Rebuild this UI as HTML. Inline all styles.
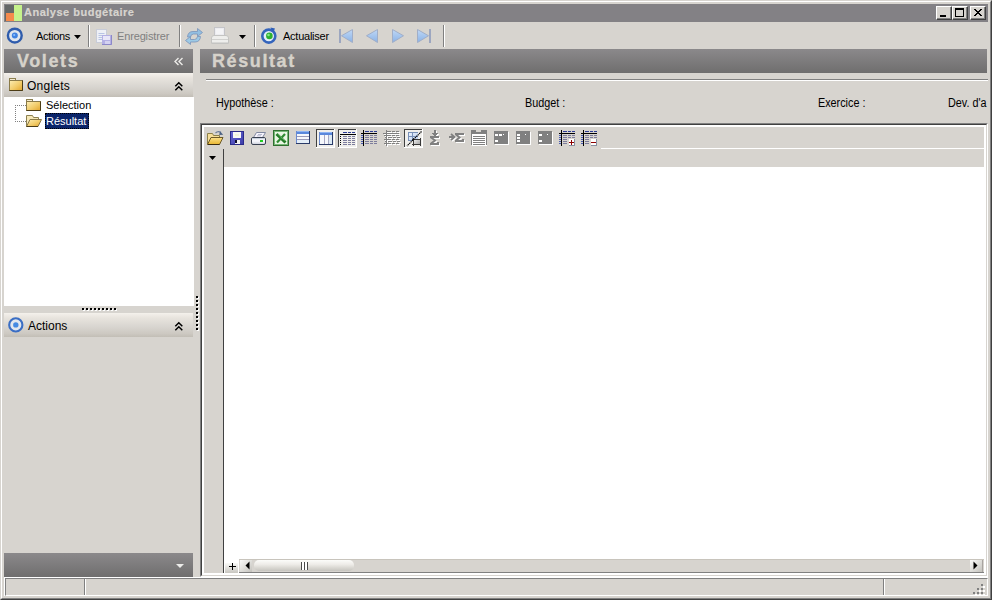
<!DOCTYPE html>
<html><head><meta charset="utf-8">
<style>
*{margin:0;padding:0;box-sizing:border-box}
html,body{width:992px;height:600px;overflow:hidden;background:#d7d4cf;font-family:"Liberation Sans",sans-serif;font-size:11px;color:#000}
.a{position:absolute}
.t{position:absolute;white-space:nowrap;line-height:13px}
svg{position:absolute;overflow:visible}
.sep{position:absolute;top:25px;width:2px;height:22px;border-left:1px solid #808080;border-right:1px solid #fff}
.hdrD{position:absolute;background:linear-gradient(#8b898b,#6f6e6e)}
.hdrL{position:absolute;background:linear-gradient(#f4f1ec 0%,#e8e4de 20%,#d9d6d1 55%,#cdc9c2 85%,#c2beb6 100%)}
.btn{position:absolute;width:16px;height:14px;background:#d7d4cf;border-top:1px solid #fff;border-left:1px solid #fff;border-right:1px solid #404040;border-bottom:1px solid #404040;box-shadow:inset -1px -1px 0 #808080}
.press{position:absolute;width:19px;height:19px;border-top:1px solid #404040;border-left:1px solid #404040;border-right:1px solid #fff;border-bottom:1px solid #fff;background:#eae8e4}
</style></head><body>
<!-- window frame -->
<div class="a" style="left:0;top:0;width:992px;height:600px;border-top:1px solid #d7d4cf;border-left:1px solid #d7d4cf;border-right:1px solid #404040;border-bottom:1px solid #404040"></div>
<div class="a" style="left:1px;top:1px;width:990px;height:598px;border-top:1px solid #fff;border-left:1px solid #fff;border-right:1px solid #808080;border-bottom:1px solid #808080"></div>

<!-- title bar -->
<div class="a" style="left:4px;top:4px;width:984px;height:18px;background:#838185"></div>
<div class="a" style="left:5px;top:5px;width:9px;height:16px;background:#656867"></div>
<div class="a" style="left:6px;top:13px;width:8px;height:8px;background:#f58a4c"></div>
<div class="a" style="left:14px;top:5px;width:8px;height:16px;background:#c6f28c"></div>
<div class="t" style="left:24px;top:6px;font-weight:bold;font-size:11px;color:#d7d4cf;letter-spacing:0.5px;-webkit-text-stroke:0.2px #d7d4cf">Analyse budgétaire</div>
<div class="btn" style="left:936px;top:6px"><div class="a" style="left:3px;top:8px;width:6px;height:2px;background:#000"></div></div>
<div class="btn" style="left:952px;top:6px"><div class="a" style="left:2px;top:1px;width:9px;height:9px;border:1px solid #000;border-top-width:2px"></div></div>
<div class="btn" style="left:970px;top:6px"><svg width="8" height="7" style="left:3px;top:2px" fill="#000"><rect x="0" y="0" width="1" height="1"/><rect x="1" y="0" width="1" height="1"/><rect x="6" y="0" width="1" height="1"/><rect x="7" y="0" width="1" height="1"/><rect x="1" y="1" width="1" height="1"/><rect x="2" y="1" width="1" height="1"/><rect x="5" y="1" width="1" height="1"/><rect x="6" y="1" width="1" height="1"/><rect x="2" y="2" width="1" height="1"/><rect x="3" y="2" width="1" height="1"/><rect x="4" y="2" width="1" height="1"/><rect x="5" y="2" width="1" height="1"/><rect x="3" y="3" width="1" height="1"/><rect x="4" y="3" width="1" height="1"/><rect x="2" y="4" width="1" height="1"/><rect x="3" y="4" width="1" height="1"/><rect x="4" y="4" width="1" height="1"/><rect x="5" y="4" width="1" height="1"/><rect x="1" y="5" width="1" height="1"/><rect x="2" y="5" width="1" height="1"/><rect x="5" y="5" width="1" height="1"/><rect x="6" y="5" width="1" height="1"/><rect x="0" y="6" width="1" height="1"/><rect x="1" y="6" width="1" height="1"/><rect x="6" y="6" width="1" height="1"/><rect x="7" y="6" width="1" height="1"/></svg></div>

<!-- toolbar -->
<div class="t" style="left:36px;top:30px;letter-spacing:-0.3px">Actions</div>
<div class="sep" style="left:88px"></div>
<div class="t" style="left:117px;top:30px;color:#808080;letter-spacing:-0.15px">Enregistrer</div>
<div class="sep" style="left:179px"></div>
<div class="sep" style="left:254px"></div>
<div class="t" style="left:283px;top:30px;letter-spacing:-0.25px">Actualiser</div>
<div class="sep" style="left:443px"></div>
<svg width="992" height="600" style="left:0;top:0"><circle cx="14.8" cy="35.6" r="6.9" fill="#e0e6ee" stroke="#2f5cac" stroke-width="2.4"/><circle cx="14.8" cy="35.6" r="3" fill="#3f82e2"/><circle cx="14.2" cy="35" r="1.1" fill="#8cc0ff"/><path d="M74 35 H81 L77.5 39Z" fill="#000"/><rect x="96.5" y="29.5" width="10" height="13" fill="#eef0f6" stroke="#c8ccd8"/><path d="M98.5 33.5h6M98.5 35.5h6M98.5 37.5h4M98.5 39.5h4" stroke="#b8c4e4"/><rect x="102" y="35" width="10" height="10" fill="#b4b0e4"/><path d="M111.5 35 V44.5 H102" fill="none" stroke="#8c88c8"/><rect x="103" y="36" width="7" height="4" fill="#e8e6f8"/><rect x="105" y="41" width="5" height="3" fill="#d4d2f0"/><path d="M187.5 37 Q188 31.5 193 31.5 H197.5 V28.5 L202.5 32.5 L197.5 36.5 V34 H193.5 Q191 34 190.5 37Z" fill="#92bfe2" stroke="#8098bc" stroke-width="0.9"/><path d="M200.5 36.5 Q200 42 195 42 H190.5 V44.5 L185.5 40.5 L190.5 36.5 V39.5 H194.5 Q197 39.5 197.5 36.5Z" fill="#9ccae6" stroke="#8098bc" stroke-width="0.9"/><rect x="214.5" y="27.5" width="10" height="8" fill="#ececf0" stroke="#c4c4c8"/><rect x="216" y="29" width="7" height="5" fill="#f4f4f6"/><path d="M211.5 43.5 V38 Q211.5 35.5 214 35.5 H226 Q228.5 35.5 228.5 38 V43.5Z" fill="#eeeeec" stroke="#c4c4c2"/><rect x="212" y="39" width="16" height="1" fill="#d0d0ce"/><rect x="212" y="42" width="16" height="1" fill="#d8d8d6"/><path d="M239 35 H246 L242.5 39Z" fill="#000"/><circle cx="268.8" cy="36.1" r="6.5" fill="#e4eef8" stroke="#3464bc" stroke-width="2.6"/><path d="M270.5 27.6 L275 28.4 L273.2 32.6 Z" fill="#2f5fb8"/><circle cx="269.4" cy="35.9" r="3.3" fill="#2eb030"/><circle cx="268.5" cy="35" r="1.3" fill="#86e486"/><defs><linearGradient id="nb" x1="0" y1="0" x2="0" y2="1"><stop offset="0" stop-color="#c0d8f6"/><stop offset="1" stop-color="#8ab2e6"/></linearGradient></defs><rect x="339" y="29" width="2" height="14" fill="#9ca6c0"/><path d="M341.5 35.75 L352.5 29.5 V42.5Z" fill="url(#nb)" stroke="#a0aec8"/><path d="M366.5 35.75 L377.5 29.5 V42.5Z" fill="url(#nb)" stroke="#a0aec8"/><path d="M392.5 29.5 L403.5 35.75 L392.5 42.5Z" fill="url(#nb)" stroke="#a0aec8"/><path d="M417.5 29.5 L428.5 35.75 L417.5 42.5Z" fill="url(#nb)" stroke="#a0aec8"/><rect x="429" y="29" width="2" height="14" fill="#9ca6c0"/></svg>

<!-- left pane -->
<div class="hdrD" style="left:4px;top:49px;width:189px;height:24px"></div>
<div class="t" style="left:17px;top:51px;font-weight:bold;font-size:18px;line-height:20px;color:#d6d2ca;letter-spacing:1.6px;-webkit-text-stroke:0.35px #d6d2ca">Volets</div>
<svg width="10" height="9" style="left:174px;top:58px"><path d="M4.5 0 L1 3.5 L4.5 7 M8.5 0 L5 3.5 L8.5 7" fill="none" stroke="#ecebe8" stroke-width="1.4"/></svg>
<div class="hdrL" style="left:4px;top:73px;width:189px;height:24px"></div>
<svg width="992" height="600" style="left:0;top:0">
<defs><linearGradient id="fg" x1="0" y1="0" x2="1" y2="1"><stop offset="0" stop-color="#fdeeb4"/><stop offset="0.55" stop-color="#f2cc6a"/><stop offset="1" stop-color="#e2a42a"/></linearGradient></defs>
<rect x="9.5" y="78.5" width="6" height="3" fill="#f4ead0" stroke="#8c8050"/>
<rect x="9.5" y="80.5" width="13" height="10" fill="url(#fg)" stroke="#8a7a48"/>
<path d="M22.5 80.5 V90.5 H9.5" fill="none" stroke="#4c3c14"/>
</svg>
<div class="t" style="left:27px;top:79px;font-size:12px;line-height:14px;letter-spacing:0.25px">Onglets</div>
<svg width="9" height="10" style="left:175px;top:82px"><path d="M0.3 4.2 L3.8 0.7 L7.3 4.2 M0.3 8.2 L3.8 4.7 L7.3 8.2" fill="none" stroke="#000" stroke-width="1.5"/></svg>
<div class="a" style="left:4px;top:97px;width:190px;height:209px;background:#fff"></div>
<!-- tree lines -->
<div class="a" style="left:15px;top:105px;width:1px;height:17px;background:repeating-linear-gradient(#808080 0 1px,transparent 1px 2px)"></div>
<div class="a" style="left:15px;top:105px;width:11px;height:1px;background:repeating-linear-gradient(90deg,#808080 0 1px,transparent 1px 2px)"></div>
<div class="a" style="left:15px;top:121px;width:11px;height:1px;background:repeating-linear-gradient(90deg,#808080 0 1px,transparent 1px 2px)"></div>
<svg width="992" height="600" style="left:0;top:0">
<rect x="26.5" y="99.5" width="6" height="3" fill="#f4ead0" stroke="#8c8050"/>
<rect x="26.5" y="101.5" width="14" height="9" fill="url(#fg)" stroke="#8a7a48"/>
<path d="M40.5 101.5 V110.5 H26.5" fill="none" stroke="#4c3c14"/>
<path d="M26.5 126.5 V115.5 H32.5 L33.5 117.5 H38.5 V120" fill="#f6e8b8" stroke="#8c8050"/>
<path d="M26.5 126.5 L30 119.5 H41.5 L38 126.5Z" fill="url(#fg)" stroke="#8a7a48"/>
<path d="M26.5 126.5 H38" stroke="#4c3c14"/>
</svg>
<div class="t" style="left:46px;top:99px">Sélection</div>
<div class="a" style="left:45px;top:113px;width:44px;height:16px;background:#0a246a;outline:1px dotted #000;outline-offset:-1px"></div>
<div class="t" style="left:46px;top:115px;color:#fff">Résultat</div>
<!-- splitter dots -->
<div class="a" style="left:83px;top:309px;width:34px;height:2px;background:repeating-linear-gradient(90deg,#fff 0 2px,transparent 2px 4px)"></div>
<div class="a" style="left:82px;top:308px;width:34px;height:2px;background:repeating-linear-gradient(90deg,#000 0 2px,transparent 2px 4px)"></div>
<div class="a" style="left:197px;top:297px;width:2px;height:34px;background:repeating-linear-gradient(#fff 0 2px,transparent 2px 4px)"></div>
<div class="a" style="left:196px;top:296px;width:2px;height:34px;background:repeating-linear-gradient(#000 0 2px,transparent 2px 4px)"></div>

<div class="hdrL" style="left:4px;top:313px;width:189px;height:24px"></div>
<svg width="17" height="17" style="left:7px;top:316px"><circle cx="8.8" cy="8.9" r="6.6" fill="#e2e7ee" stroke="#3b6ec4" stroke-width="2.1"/><circle cx="8.8" cy="8.9" r="2.7" fill="#448ae2"/></svg>
<div class="t" style="left:28px;top:319px;font-size:12px;line-height:14px;letter-spacing:0px">Actions</div>
<svg width="9" height="10" style="left:175px;top:322px"><path d="M0.3 4.2 L3.8 0.7 L7.3 4.2 M0.3 8.2 L3.8 4.7 L7.3 8.2" fill="none" stroke="#000" stroke-width="1.5"/></svg>

<div class="hdrD" style="left:4px;top:553px;width:189px;height:24px"></div>
<svg width="9" height="5" style="left:176px;top:564px"><path d="M0 0H8L4 4Z" fill="#ececea"/></svg>

<!-- right pane -->
<div class="hdrD" style="left:200px;top:49px;width:787px;height:24px"></div>
<div class="t" style="left:212px;top:51px;font-weight:bold;font-size:18px;line-height:20px;color:#d6d2ca;letter-spacing:1.6px;-webkit-text-stroke:0.35px #d6d2ca">Résultat</div>
<div class="a" style="left:206px;top:79px;width:782px;height:1px;background:#808080"></div>
<div class="a" style="left:206px;top:80px;width:782px;height:1px;background:#fff"></div>
<div class="t" style="left:216px;top:96px;font-size:12px;line-height:14px;transform:scaleX(0.9);transform-origin:0 0">Hypothèse :</div>
<div class="t" style="left:525px;top:96px;font-size:12px;line-height:14px;transform:scaleX(0.9);transform-origin:0 0">Budget :</div>
<div class="t" style="left:818px;top:96px;font-size:12px;line-height:14px;transform:scaleX(0.9);transform-origin:0 0">Exercice :</div>
<div class="a" style="left:948px;top:94px;width:40px;height:18px;overflow:hidden"><div class="t" style="left:0;top:2px;font-size:12px;line-height:14px;transform:scaleX(0.9);transform-origin:0 0">Dev. d'a</div></div>

<!-- grid -->
<div class="a" style="left:200px;top:123px;width:788px;height:454px;border-top:1px solid #808080;border-left:1px solid #808080;border-right:1px solid #fff;border-bottom:1px solid #fff"></div>
<div class="a" style="left:201px;top:124px;width:786px;height:452px;border-top:1px solid #404040;border-left:1px solid #404040;border-right:1px solid #d7d4cf;border-bottom:1px solid #d7d4cf"></div>
<div class="a" style="left:202px;top:125px;width:784px;height:450px;background:#fff"></div>
<div class="a" style="left:204px;top:127px;width:780px;height:21px;background:#d7d4cf"></div>
<div class="a" style="left:204px;top:148px;width:397px;height:1px;background:#d7d4cf"></div>
<div class="a" style="left:204px;top:149px;width:780px;height:18px;background:#d7d4cf"></div>
<div class="a" style="left:204px;top:149px;width:19px;height:424px;background:#d7d4cf"></div>
<div class="a" style="left:223px;top:149px;width:1px;height:424px;background:#404040"></div>
<svg width="8" height="5" style="left:209px;top:156px"><path d="M0 0H7L3.5 4Z" fill="#000"/></svg>

<!-- grid toolbar icons -->
<svg width="992" height="600" style="left:0;top:0"><defs>
<linearGradient id="fy" x1="0" y1="0" x2="0" y2="1"><stop offset="0" stop-color="#fae08a"/><stop offset="1" stop-color="#eab630"/></linearGradient>
<linearGradient id="fl" x1="0" y1="0" x2="1" y2="1"><stop offset="0" stop-color="#6868d6"/><stop offset="1" stop-color="#3a3aa6"/></linearGradient>
<linearGradient id="pr" x1="0" y1="0" x2="0" y2="1"><stop offset="0" stop-color="#e0e4ec"/><stop offset="0.5" stop-color="#fafaff"/><stop offset="1" stop-color="#c8ccd8"/></linearGradient>
<linearGradient id="bl" x1="0" y1="0" x2="1" y2="1"><stop offset="0" stop-color="#f0f6ff"/><stop offset="1" stop-color="#b8ccec"/></linearGradient>
<linearGradient id="gb" x1="0" y1="0" x2="1" y2="1"><stop offset="0" stop-color="#f8f8f8"/><stop offset="1" stop-color="#a0a0a0"/></linearGradient>
</defs><path d="M207.5 144.5 V133.5 H212.5 L213.5 135.5 H219.5 V137.5" fill="#f6de98" stroke="#8c8048"/><path d="M207.5 144.5 L211 137.5 H223 L219.5 144.5Z" fill="url(#fy)" stroke="#6c5a28"/><path d="M208 144.5 H219.5" stroke="#3c2c10"/><path d="M215.5 133 Q218 130.5 221 132.5" fill="none" stroke="#6a7c98" stroke-width="1.1"/><path d="M220 131.2 L223.2 134.8 L219.2 135Z" fill="#4c6284"/><rect x="230" y="131" width="14" height="14" fill="url(#fl)"/><rect x="230.5" y="131.5" width="13" height="13" fill="none" stroke="#2a2a88"/><rect x="233" y="132" width="8" height="6" fill="#f8f8f4"/><rect x="235" y="134" width="4" height="2" fill="#f0f4d8"/><rect x="235" y="140" width="5" height="4" fill="#f4f4f4"/><rect x="235" y="140" width="2" height="3" fill="#101030"/><path d="M256.5 132.5 H265.5 L262.5 137.5 H253.5Z" fill="#f6f4fc" stroke="#8088a0"/><path d="M258 134.5 H262 M257 135.8 H261" stroke="#a8acc4" stroke-width="0.8"/><path d="M253 137.5 H264 Q265.5 137.5 265.5 139 V143 Q265.5 144.5 264 144.5 H253 Q251.5 144.5 251.5 143 V139 Q251.5 137.5 253 137.5Z" fill="url(#pr)" stroke="#3a4252"/><rect x="252" y="138" width="13" height="1" fill="#c8d0dc"/><rect x="260" y="140" width="3" height="2" fill="#22cc22"/><rect x="273" y="130" width="16" height="16" fill="#2f6f2f"/><rect x="274" y="131" width="14" height="14" fill="#78b878"/><rect x="275" y="132" width="12" height="12" fill="#eaf6e4"/><path d="M276.5 134 L285.5 142.5" stroke="#237a26" stroke-width="3"/><path d="M285 134 L277 142.5" stroke="#2f8a32" stroke-width="2.2"/><path d="M277.5 133.8 L284.5 140.5" stroke="#7cc87c" stroke-width="0.7"/><rect x="296" y="131" width="14" height="13" fill="#2a3a68"/><rect x="297" y="131" width="12" height="3" fill="#5a88dc"/><rect x="297" y="131" width="12" height="1" fill="#8eb4f4"/><rect x="296" y="131" width="1" height="12" fill="#6a8ad0"/><rect x="297" y="134" width="12" height="9" fill="#f6f8fc"/><rect x="297" y="136" width="12" height="1" fill="#9a9ab8"/><rect x="297" y="139" width="12" height="1" fill="#9a9ab8"/><rect x="297" y="140" width="12" height="3" fill="#e4eef8"/><rect x="316" y="129" width="19" height="19" fill="#fff"/><rect x="316" y="129" width="18" height="18" fill="#404040"/><rect x="317" y="130" width="17" height="17" fill="#f0efec"/><rect x="338" y="129" width="19" height="19" fill="#fff"/><rect x="338" y="129" width="18" height="18" fill="#404040"/><rect x="339" y="130" width="17" height="17" fill="#f0efec"/><rect x="404" y="129" width="19" height="19" fill="#fff"/><rect x="404" y="129" width="18" height="18" fill="#404040"/><rect x="405" y="130" width="17" height="17" fill="#f0efec"/><rect x="319" y="132" width="14" height="13" fill="#2a3a68"/><rect x="320" y="132" width="12" height="3" fill="#5a88dc"/><rect x="320" y="132" width="12" height="1" fill="#8eb4f4"/><rect x="319" y="132" width="1" height="12" fill="#6a8ad0"/><rect x="320" y="135" width="12" height="9" fill="#f6f8fc"/><rect x="324" y="135" width="1" height="9" fill="#a8a8c4"/><rect x="328" y="135" width="1" height="9" fill="#a8a8c4"/><rect x="329" y="135" width="3" height="9" fill="#dceaf4"/><rect x="343" y="132" width="4" height="1" fill="#2c3c94"/><rect x="348" y="132" width="3" height="1" fill="#2c3c94"/><rect x="352" y="132" width="3" height="1" fill="#2c3c94"/><rect x="340" y="134" width="16" height="1" fill="#000"/><rect x="340" y="136" width="1" height="1" fill="#000"/><rect x="343" y="136" width="4" height="1" fill="#7c7c9c"/><rect x="348" y="136" width="3" height="1" fill="#7c7c9c"/><rect x="352" y="136" width="3" height="1" fill="#7c7c9c"/><rect x="340" y="138" width="1" height="1" fill="#000"/><rect x="343" y="138" width="4" height="1" fill="#7c7c9c"/><rect x="348" y="138" width="3" height="1" fill="#7c7c9c"/><rect x="352" y="138" width="3" height="1" fill="#7c7c9c"/><rect x="340" y="140" width="1" height="1" fill="#000"/><rect x="343" y="140" width="4" height="1" fill="#7c7c9c"/><rect x="348" y="140" width="3" height="1" fill="#7c7c9c"/><rect x="352" y="140" width="3" height="1" fill="#7c7c9c"/><rect x="340" y="142" width="1" height="1" fill="#000"/><rect x="343" y="142" width="4" height="1" fill="#7c7c9c"/><rect x="348" y="142" width="3" height="1" fill="#7c7c9c"/><rect x="352" y="142" width="3" height="1" fill="#7c7c9c"/><rect x="340" y="144" width="1" height="1" fill="#000"/><rect x="343" y="144" width="4" height="1" fill="#7c7c9c"/><rect x="348" y="144" width="3" height="1" fill="#7c7c9c"/><rect x="352" y="144" width="3" height="1" fill="#7c7c9c"/><rect x="363" y="130" width="1" height="16" fill="#000"/><rect x="361" y="133" width="16" height="1" fill="#000"/><rect x="365" y="131" width="4" height="1" fill="#2c3c94"/><rect x="370" y="131" width="3" height="1" fill="#2c3c94"/><rect x="374" y="131" width="3" height="1" fill="#2c3c94"/><rect x="361" y="135" width="2" height="1" fill="#4a5cb0"/><rect x="365" y="135" width="4" height="1" fill="#7c7c9c"/><rect x="370" y="135" width="3" height="1" fill="#7c7c9c"/><rect x="374" y="135" width="3" height="1" fill="#7c7c9c"/><rect x="361" y="137" width="2" height="1" fill="#4a5cb0"/><rect x="365" y="137" width="4" height="1" fill="#7c7c9c"/><rect x="370" y="137" width="3" height="1" fill="#7c7c9c"/><rect x="374" y="137" width="3" height="1" fill="#7c7c9c"/><rect x="361" y="139" width="2" height="1" fill="#4a5cb0"/><rect x="365" y="139" width="4" height="1" fill="#7c7c9c"/><rect x="370" y="139" width="3" height="1" fill="#7c7c9c"/><rect x="374" y="139" width="3" height="1" fill="#7c7c9c"/><rect x="361" y="141" width="2" height="1" fill="#4a5cb0"/><rect x="365" y="141" width="4" height="1" fill="#7c7c9c"/><rect x="370" y="141" width="3" height="1" fill="#7c7c9c"/><rect x="374" y="141" width="3" height="1" fill="#7c7c9c"/><rect x="361" y="143" width="2" height="1" fill="#4a5cb0"/><rect x="365" y="143" width="4" height="1" fill="#7c7c9c"/><rect x="370" y="143" width="3" height="1" fill="#7c7c9c"/><rect x="374" y="143" width="3" height="1" fill="#7c7c9c"/><g transform="translate(1,1)"><rect x="386" y="130" width="1" height="16" fill="#fff"/><rect x="383" y="133" width="16" height="1" fill="#fff"/><rect x="387" y="131" width="4" height="1" fill="#fff"/><rect x="392" y="131" width="3" height="1" fill="#fff"/><rect x="396" y="131" width="3" height="1" fill="#fff"/><rect x="384" y="135" width="2" height="1" fill="#fff"/><rect x="387" y="135" width="4" height="1" fill="#fff"/><rect x="392" y="135" width="3" height="1" fill="#fff"/><rect x="396" y="135" width="3" height="1" fill="#fff"/><rect x="385" y="137" width="1" height="1" fill="#fff"/><rect x="388" y="137" width="4" height="1" fill="#fff"/><rect x="393" y="137" width="3" height="1" fill="#fff"/><rect x="397" y="137" width="3" height="1" fill="#fff"/><rect x="384" y="139" width="2" height="1" fill="#fff"/><rect x="387" y="139" width="4" height="1" fill="#fff"/><rect x="392" y="139" width="3" height="1" fill="#fff"/><rect x="396" y="139" width="3" height="1" fill="#fff"/><rect x="385" y="141" width="1" height="1" fill="#fff"/><rect x="388" y="141" width="4" height="1" fill="#fff"/><rect x="393" y="141" width="3" height="1" fill="#fff"/><rect x="397" y="141" width="3" height="1" fill="#fff"/><rect x="384" y="143" width="2" height="1" fill="#fff"/><rect x="387" y="143" width="4" height="1" fill="#fff"/><rect x="392" y="143" width="3" height="1" fill="#fff"/><rect x="396" y="143" width="3" height="1" fill="#fff"/></g><rect x="386" y="130" width="1" height="16" fill="#808080"/><rect x="383" y="133" width="16" height="1" fill="#808080"/><rect x="387" y="131" width="4" height="1" fill="#808080"/><rect x="392" y="131" width="3" height="1" fill="#808080"/><rect x="396" y="131" width="3" height="1" fill="#808080"/><rect x="384" y="135" width="2" height="1" fill="#808080"/><rect x="387" y="135" width="4" height="1" fill="#808080"/><rect x="392" y="135" width="3" height="1" fill="#808080"/><rect x="396" y="135" width="3" height="1" fill="#808080"/><rect x="385" y="137" width="1" height="1" fill="#808080"/><rect x="388" y="137" width="4" height="1" fill="#808080"/><rect x="393" y="137" width="3" height="1" fill="#808080"/><rect x="397" y="137" width="3" height="1" fill="#808080"/><rect x="384" y="139" width="2" height="1" fill="#808080"/><rect x="387" y="139" width="4" height="1" fill="#808080"/><rect x="392" y="139" width="3" height="1" fill="#808080"/><rect x="396" y="139" width="3" height="1" fill="#808080"/><rect x="385" y="141" width="1" height="1" fill="#808080"/><rect x="388" y="141" width="4" height="1" fill="#808080"/><rect x="393" y="141" width="3" height="1" fill="#808080"/><rect x="397" y="141" width="3" height="1" fill="#808080"/><rect x="384" y="143" width="2" height="1" fill="#808080"/><rect x="387" y="143" width="4" height="1" fill="#808080"/><rect x="392" y="143" width="3" height="1" fill="#808080"/><rect x="396" y="143" width="3" height="1" fill="#808080"/><rect x="408" y="132" width="10" height="9" fill="url(#bl)"/><rect x="408" y="132" width="10" height="1" fill="#7890b8"/><rect x="408" y="132" width="1" height="9" fill="#7890b8"/><rect x="412" y="132" width="1" height="9" fill="#7890b8"/><rect x="408" y="136" width="10" height="1" fill="#7890b8"/><rect x="408" y="140" width="5" height="1" fill="#7890b8"/><rect x="413" y="139" width="7" height="6" fill="url(#gb)"/><rect x="413" y="138" width="1" height="8" fill="#383838"/><rect x="420" y="138" width="1" height="8" fill="#383838"/><rect x="412" y="139" width="9" height="1" fill="#383838"/><rect x="412" y="144" width="9" height="1" fill="#383838"/><path d="M421.5 131.5 L407 146" stroke="#000" stroke-width="1.1" stroke-dasharray="1.4 0.6"/><g transform="translate(1,1)"><rect x="434" y="130" width="2" height="4" fill="#fff"/><rect x="432" y="133" width="6" height="1" fill="#fff"/><rect x="433" y="134" width="4" height="1" fill="#fff"/><rect x="434" y="135" width="2" height="1" fill="#fff"/><rect x="430" y="136" width="9" height="2" fill="#fff"/><path d="M431 137.5 L435 140.5 L431 143.5" fill="none" stroke="#fff" stroke-width="2"/><rect x="430" y="143" width="9" height="2" fill="#fff"/><rect x="437" y="142" width="2" height="1" fill="#fff"/></g><rect x="434" y="130" width="2" height="4" fill="#808080"/><rect x="432" y="133" width="6" height="1" fill="#808080"/><rect x="433" y="134" width="4" height="1" fill="#808080"/><rect x="434" y="135" width="2" height="1" fill="#808080"/><rect x="430" y="136" width="9" height="2" fill="#808080"/><path d="M431 137.5 L435 140.5 L431 143.5" fill="none" stroke="#808080" stroke-width="2"/><rect x="430" y="143" width="9" height="2" fill="#808080"/><rect x="437" y="142" width="2" height="1" fill="#808080"/><g transform="translate(1,1)"><rect x="449" y="136" width="5" height="2" fill="#fff"/><path d="M451 134 L454.5 137 L451 140" fill="none" stroke="#fff" stroke-width="1.8"/><rect x="455" y="133" width="9" height="2" fill="#fff"/><path d="M456 134.5 L459.5 137.5 L456 140.5" fill="none" stroke="#fff" stroke-width="2"/><rect x="455" y="140" width="9" height="2" fill="#fff"/><rect x="462" y="139" width="2" height="1" fill="#fff"/></g><rect x="449" y="136" width="5" height="2" fill="#808080"/><path d="M451 134 L454.5 137 L451 140" fill="none" stroke="#808080" stroke-width="1.8"/><rect x="455" y="133" width="9" height="2" fill="#808080"/><path d="M456 134.5 L459.5 137.5 L456 140.5" fill="none" stroke="#808080" stroke-width="2"/><rect x="455" y="140" width="9" height="2" fill="#808080"/><rect x="462" y="139" width="2" height="1" fill="#808080"/><rect x="472" y="134" width="15" height="12" fill="#fff"/><rect x="471" y="130" width="1" height="15" fill="#808080"/><rect x="486" y="130" width="1" height="15" fill="#808080"/><rect x="472" y="130" width="4" height="4" fill="#808080"/><rect x="481" y="130" width="5" height="4" fill="#808080"/><rect x="476" y="132" width="5" height="2" fill="#808080"/><rect x="473" y="136" width="12" height="1" fill="#808080"/><rect x="473" y="138" width="12" height="1" fill="#808080"/><rect x="473" y="140" width="12" height="1" fill="#808080"/><rect x="473" y="142" width="12" height="1" fill="#808080"/><rect x="473" y="144" width="12" height="1" fill="#808080"/><rect x="495" y="132" width="14" height="13" fill="#fff"/><rect x="494" y="131" width="14" height="13" fill="#808080"/><rect x="517" y="132" width="14" height="13" fill="#fff"/><rect x="516" y="131" width="14" height="13" fill="#808080"/><rect x="539" y="132" width="14" height="13" fill="#fff"/><rect x="538" y="131" width="14" height="13" fill="#808080"/><rect x="495" y="134" width="3" height="2" fill="#fff"/><rect x="499" y="134" width="3" height="2" fill="#fff"/><rect x="503" y="134" width="1" height="1" fill="#fff"/><rect x="495" y="140" width="3" height="2" fill="#fff"/><rect x="495" y="140" width="1" height="1" fill="#fff"/><rect x="517" y="134" width="3" height="2" fill="#fff"/><rect x="517" y="137" width="3" height="2" fill="#fff"/><rect x="517" y="140" width="3" height="2" fill="#fff"/><rect x="525" y="134" width="1" height="1" fill="#fff"/><rect x="539" y="134" width="3" height="2" fill="#fff"/><rect x="539" y="140" width="3" height="2" fill="#fff"/><rect x="547" y="134" width="1" height="1" fill="#fff"/><rect x="561" y="130" width="1" height="16" fill="#000"/><rect x="559" y="133" width="16" height="1" fill="#000"/><rect x="563" y="131" width="4" height="1" fill="#2c3c94"/><rect x="568" y="131" width="3" height="1" fill="#2c3c94"/><rect x="572" y="131" width="3" height="1" fill="#2c3c94"/><rect x="559" y="135" width="2" height="1" fill="#4a5cb0"/><rect x="563" y="135" width="4" height="1" fill="#7c7c9c"/><rect x="568" y="135" width="3" height="1" fill="#7c7c9c"/><rect x="572" y="135" width="3" height="1" fill="#7c7c9c"/><rect x="559" y="137" width="2" height="1" fill="#4a5cb0"/><rect x="563" y="137" width="4" height="1" fill="#7c7c9c"/><rect x="568" y="137" width="3" height="1" fill="#7c7c9c"/><rect x="572" y="137" width="3" height="1" fill="#7c7c9c"/><rect x="559" y="139" width="2" height="1" fill="#4a5cb0"/><rect x="563" y="139" width="4" height="1" fill="#7c7c9c"/><rect x="559" y="141" width="2" height="1" fill="#4a5cb0"/><rect x="563" y="141" width="4" height="1" fill="#7c7c9c"/><rect x="559" y="143" width="2" height="1" fill="#4a5cb0"/><rect x="563" y="143" width="4" height="1" fill="#7c7c9c"/><rect x="569" y="139" width="6" height="7" fill="#8890a0"/><rect x="569" y="139" width="5" height="6" fill="#fff"/><rect x="571" y="140" width="1" height="5" fill="#900000"/><rect x="569" y="142" width="5" height="1" fill="#900000"/><rect x="583" y="130" width="1" height="16" fill="#000"/><rect x="581" y="133" width="16" height="1" fill="#000"/><rect x="585" y="131" width="4" height="1" fill="#2c3c94"/><rect x="590" y="131" width="3" height="1" fill="#2c3c94"/><rect x="594" y="131" width="3" height="1" fill="#2c3c94"/><rect x="581" y="135" width="2" height="1" fill="#4a5cb0"/><rect x="585" y="135" width="4" height="1" fill="#7c7c9c"/><rect x="590" y="135" width="3" height="1" fill="#7c7c9c"/><rect x="594" y="135" width="3" height="1" fill="#7c7c9c"/><rect x="581" y="137" width="2" height="1" fill="#4a5cb0"/><rect x="585" y="137" width="4" height="1" fill="#7c7c9c"/><rect x="590" y="137" width="3" height="1" fill="#7c7c9c"/><rect x="594" y="137" width="3" height="1" fill="#7c7c9c"/><rect x="581" y="139" width="2" height="1" fill="#4a5cb0"/><rect x="585" y="139" width="4" height="1" fill="#7c7c9c"/><rect x="581" y="141" width="2" height="1" fill="#4a5cb0"/><rect x="585" y="141" width="4" height="1" fill="#7c7c9c"/><rect x="581" y="143" width="2" height="1" fill="#4a5cb0"/><rect x="585" y="143" width="4" height="1" fill="#7c7c9c"/><rect x="591" y="139" width="6" height="7" fill="#8890a0"/><rect x="591" y="139" width="5" height="6" fill="#fff"/><rect x="591" y="142" width="5" height="1" fill="#900000"/></svg>

<!-- scrollbar -->
<div class="a" style="left:225px;top:563px;width:13px;height:10px;background:linear-gradient(#fafaf8,#c8c6c0)"></div>
<div class="a" style="left:232px;top:563px;width:1px;height:7px;background:#000"></div><div class="a" style="left:229px;top:566px;width:7px;height:1px;background:#000"></div>
<div class="a" style="left:239px;top:559px;width:745px;height:14px;background:#d7d4cf;border-top:1px solid #c8c4bc;border-bottom:1px solid #808080"></div>
<div class="a" style="left:240px;top:560px;width:12px;height:12px;background:linear-gradient(135deg,#fbfbfa,#c4c2bc)"></div>
<svg width="6" height="10" style="left:245px;top:561px"><path d="M4.5 0.5 V8.5 L0.5 4.5Z" fill="#000"/></svg>
<div class="a" style="left:254px;top:560px;width:100px;height:11px;border-radius:5px;background:linear-gradient(#fcfcfa,#eeece8 40%,#c6c4be)"></div>
<div class="a" style="left:301px;top:562px;width:7px;height:8px;background:repeating-linear-gradient(90deg,#4a4a4a 0 1px,#fff 1px 3px)"></div>
<div class="a" style="left:970px;top:560px;width:13px;height:12px;background:linear-gradient(135deg,#fbfbfa,#c4c2bc);border-right:1px solid #a8a4a0"></div>
<svg width="6" height="10" style="left:973px;top:561px"><path d="M0.5 0.5 V8.5 L4.5 4.5Z" fill="#000"/></svg>

<!-- status bar -->
<div class="a" style="left:4px;top:577px;width:984px;height:1px;background:#fff"></div>
<div class="a" style="left:4px;top:577px;width:1px;height:19px;background:#fff"></div>
<div class="a" style="left:5px;top:578px;width:983px;height:18px;border-top:1px solid #808080;border-left:1px solid #808080;border-right:1px solid #fff;border-bottom:1px solid #fff"></div>
<div class="a" style="left:84px;top:579px;width:1px;height:16px;background:#808080"></div>
<div class="a" style="left:85px;top:579px;width:1px;height:16px;background:#fff"></div>
<div class="a" style="left:883px;top:579px;width:1px;height:16px;background:#808080"></div>
<div class="a" style="left:884px;top:579px;width:1px;height:16px;background:#fff"></div>
<svg width="14" height="14" style="left:972px;top:583px">
<path d="M10 2h2v2h-2zM6 6h2v2h-2zM10 6h2v2h-2zM2 10h2v2h-2zM6 10h2v2h-2zM10 10h2v2h-2z" fill="#fff" transform="translate(1,1)"/>
<path d="M9 1h2v2h-2zM5 5h2v2h-2zM9 5h2v2h-2zM1 9h2v2h-2zM5 9h2v2h-2zM9 9h2v2h-2z" fill="#808080"/>
</svg>
</body></html>
